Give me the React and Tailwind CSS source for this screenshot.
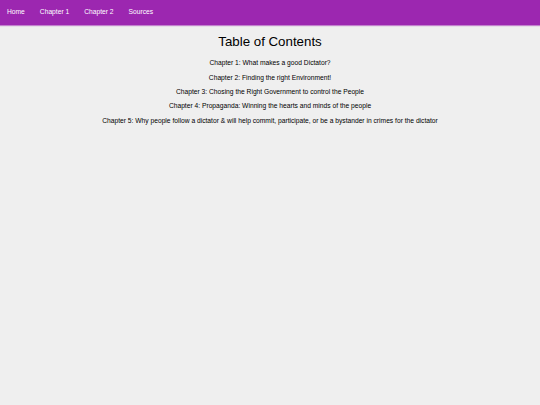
import React from 'react';

const navLinks = ['Home', 'Chapter 1', 'Chapter 2', 'Sources'];

const chapters = [
  'Chapter 1: What makes a good Dictator?',
  'Chapter 2: Finding the right Environment!',
  'Chapter 3: Chosing the Right Government to control the People',
  'Chapter 4: Propaganda: Winning the hearts and minds of the people',
  'Chapter 5: Why people follow a dictator & will help commit, participate, or be a bystander in crimes for the dictator',
];

export default function App() {
  return (
    <div className="min-h-[405px] bg-[#efefef] font-['Liberation_Sans',Arial,sans-serif] text-black">
      <nav className="flex h-[25px] items-center bg-[#9c27b0] shadow-[0_1px_1px_rgba(156,39,176,0.55)]">
        {navLinks.map((l) => (
          <a key={l} href="#" className="px-[7.5px] text-[6.7px] leading-none text-white first:pl-[7px]">
            {l}
          </a>
        ))}
      </nav>

      <main className="flex flex-col items-center pt-[9px]">
        <h1 className="mb-[6px] text-[13.3px] leading-[16px]">Table of Contents</h1>
        {chapters.map((c) => (
          <p key={c} className="my-[3.2px] text-[6.7px] leading-[8px]">
            {c}
          </p>
        ))}
      </main>
    </div>
  );
}
